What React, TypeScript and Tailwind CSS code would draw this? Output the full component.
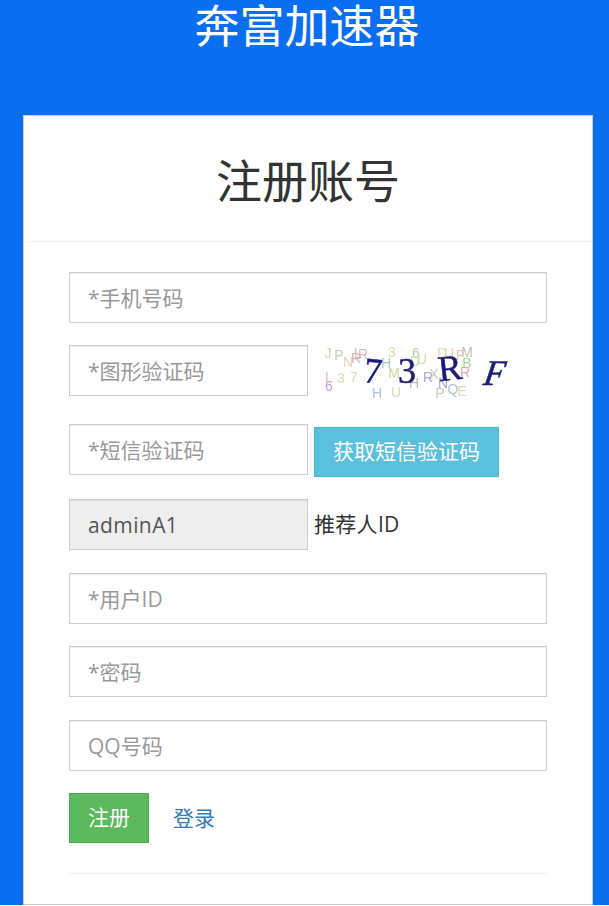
const fontStack = { fontFamily: '"Open Sans", "Noto Sans CJK SC", sans-serif' };

const noise: [string, number, number, string][] = [
  ['J', 328, 353, '#d6dba8'], ['P', 339, 355, '#c9c9c0'], ['N', 348, 362, '#e3d6b8'],
  ['R', 356, 358, '#e6a8b4'], ['R', 363, 354, '#e8b0c0'], ['L', 358, 353, '#a9d6a0'],
  ['3', 392, 352, '#dcdca8'], ['H', 386, 363, '#a8c4de'], ['6', 416, 353, '#a9d6a0'],
  ['U', 415, 361, '#b4dcae'], ['U', 422, 359, '#dcdcb0'], ['D', 442, 353, '#dcdcb0'],
  ['U', 449, 353, '#dcdcb0'], ['M', 467, 352, '#bdbdb0'], ['F', 460, 355, '#e0c8b8'],
  ['B', 467, 363, '#a9d6a0'], ['L', 329, 377, '#e0c8a8'], ['6', 329, 386, '#b8a0d8'],
  ['3', 341, 378, '#e3d6b8'], ['7', 354, 377, '#e3d6b8'], ['M', 394, 373, '#c8d8a0'],
  ['H', 414, 383, '#c0b8b8'], ['R', 428, 377, '#b0a0d8'], ['X', 434, 374, '#c9c9c0'],
  ['N', 443, 383, '#a8a0d8'], ['R', 465, 372, '#e6a8b4'], ['U', 396, 392, '#dcdcb0'],
  ['H', 377, 393, '#a8c4de'], ['P', 440, 393, '#c9c9c0'], ['Q', 453, 389, '#a8c4de'],
  ['E', 462, 391, '#dcdcb0'],
];

const Captcha = () => (
  <svg
    width="195"
    height="57"
    viewBox="314 345 195 57"
    className="ml-[6px] shrink-0 blur-[0.4px]"
    style={{ fontFamily: '"Liberation Sans", sans-serif' }}
  >
    {noise.map(([ch, x, y, color], i) => (
      <text key={i} x={x} y={y} fontSize="14" fill={color} textAnchor="middle" dominantBaseline="central">
        {ch}
      </text>
    ))}
    <g fill="#1c1c78" stroke="#1c1c78" strokeWidth="0.5" fontFamily='"Liberation Serif", serif' fontSize="36" textAnchor="middle" dominantBaseline="central">
      <text transform="translate(373 371) rotate(6)">7</text>
      <text transform="translate(407 371)">3</text>
      <text transform="translate(450 368) rotate(-6)">R</text>
      <text transform="translate(495 373) skewX(-18)">F</text>
    </g>
  </svg>
);

const Field = ({ placeholder, className = 'w-full' }: { placeholder: string; className?: string }) => (
  <input
    placeholder={placeholder}
    className={`${className} h-[51px] shrink-0 border border-[#ccc] bg-white px-[18px] text-[21px] text-[#555] placeholder:text-[#999] shadow-[inset_0_1px_1px_rgba(0,0,0,0.075)] outline-none`}
  />
);

export default function App() {
  return (
    <div className="w-[609px] bg-white" style={fontStack}>
      <div className="h-[905px] bg-[#0a6ef0] overflow-hidden">
        <div className="h-[115px] pl-[5px] text-center text-white text-[45px] leading-[52px]">奔富加速器</div>
        <div className="ml-[23px] w-[570px] h-[790px] bg-white border border-[#ccc]">
          <div className="h-[126px] pt-[4px] flex items-center justify-center border-b border-[#eee] text-[46px] text-[#333]">
            注册账号
          </div>
          <div className="px-[45px] pt-[30px]">
            <div className="mb-[22px]">
              <Field placeholder="*手机号码" />
            </div>
            <div className="mb-[22px] flex h-[57px] items-start">
              <Field placeholder="*图形验证码" className="w-[239px]" />
              <Captcha />
            </div>
            <div className="mb-[22px] flex h-[53px] items-start">
              <Field placeholder="*短信验证码" className="w-[239px]" />
              <button className="ml-[6px] mt-[3px] h-[50px] w-[185px] border border-[#46b8da] bg-[#5bc0de] text-[21px] text-white">
                获取短信验证码
              </button>
            </div>
            <div className="mb-[23px] flex items-center">
              <input
                value="adminA1"
                readOnly
                className="h-[51px] w-[239px] shrink-0 border border-[#ccc] bg-[#eee] px-[18px] text-[21px] tracking-[0.4px] text-[#555] shadow-[inset_0_1px_1px_rgba(0,0,0,0.075)] outline-none"
              />
              <span className="ml-[6px] pt-[1px] text-[21px] tracking-[0.3px] text-[#333]">推荐人ID</span>
            </div>
            <div className="mb-[22px]">
              <Field placeholder="*用户ID" />
            </div>
            <div className="mb-[23px]">
              <Field placeholder="*密码" />
            </div>
            <div className="mb-[22px]">
              <Field placeholder="QQ号码" />
            </div>
            <div className="flex items-center border-b border-[#eee] pb-[30px]">
              <button className="h-[50px] w-[80px] border border-[#4cae4c] bg-[#5cb85c] text-[21px] text-white">注册</button>
              <a className="ml-[24px] pt-[1px] text-[21px] text-[#337ab7]">登录</a>
            </div>
          </div>
        </div>
      </div>
    </div>
  );
}
